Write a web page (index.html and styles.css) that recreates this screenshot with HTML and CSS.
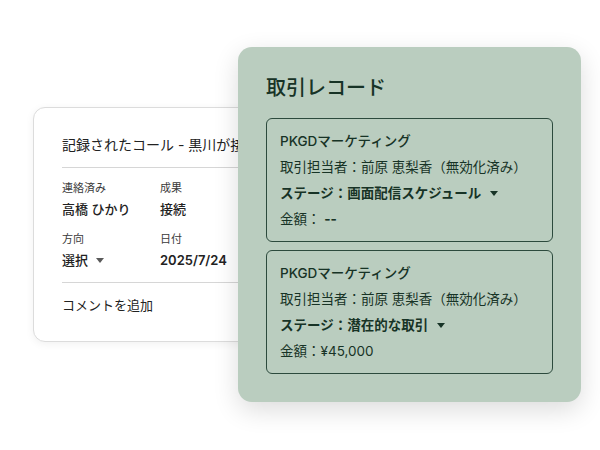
FILE: index.html
```html
<!DOCTYPE html>
<html lang="ja">
<head>
<meta charset="utf-8">
<link rel="stylesheet" href="styles.css">
</head>
<body>
<div class="canvas">
  <div class="call-card">
    <div class="call-title">記録されたコール - 黒川が接</div>
    <div class="divider"></div>
    <div class="fields">
      <div class="field">
        <div class="label">連絡済み</div>
        <div class="value">高橋 ひかり</div>
      </div>
      <div class="field">
        <div class="label">成果</div>
        <div class="value">接続</div>
      </div>
      <div class="field">
        <div class="label">方向</div>
        <div class="value">選択 <span class="caret caret-gray"></span></div>
      </div>
      <div class="field">
        <div class="label">日付</div>
        <div class="value date">2025/7/24</div>
      </div>
    </div>
    <div class="divider"></div>
    <div class="comment">コメントを追加</div>
  </div>

  <div class="deal-card">
    <div class="deal-title">取引レコード</div>
    <div class="deal-box">
      <div class="line name">PKGDマーケティング</div>
      <div class="line">取引担当者：前原 恵梨香（無効化済み）</div>
      <div class="line stage">ステージ：画面配信スケジュール <span class="caret caret-dark"></span></div>
      <div class="line">金額：&nbsp;<span class="dash">--</span></div>
    </div>
    <div class="deal-box">
      <div class="line name">PKGDマーケティング</div>
      <div class="line">取引担当者：前原 恵梨香（無効化済み）</div>
      <div class="line stage">ステージ：潜在的な取引 <span class="caret caret-dark"></span></div>
      <div class="line">金額：¥45,000</div>
    </div>
  </div>
</div>
</body>
</html>
```

FILE: styles.css
```css
html, body {
  margin: 0;
  padding: 0;
  background: #ffffff;
}
body {
  font-family: "Inter", "Noto Sans CJK JP", "Noto Sans", sans-serif;
  width: 600px;
  height: 450px;
  overflow: hidden;
}
.canvas {
  position: relative;
  width: 600px;
  height: 450px;
}
.call-card {
  position: absolute;
  left: 33px;
  top: 107px;
  width: 300px;
  height: 235px;
  box-sizing: border-box;
  padding: 27px 0 0 28px;
  background: #fff;
  border: 1px solid #dcdcdc;
  border-radius: 12px;
  box-shadow: 0 2px 8px rgba(0,0,0,0.06);
  color: #222;
}
.call-title {
  font-size: 14px;
  line-height: 20px;
  white-space: nowrap;
  color: #222;
}
.divider {
  height: 1px;
  background: #d6d6d6;
  margin: 12px 0 12px 0;
}
.fields {
  display: grid;
  grid-template-columns: 98px 1fr;
  row-gap: 12px;
}
.label {
  font-size: 11px;
  line-height: 16px;
  color: #3a3a3a;
  margin-bottom: 3px;
}
.value {
  font-size: 13px;
  line-height: 20px;
  font-weight: 500;
  color: #222;
  display: flex;
  align-items: center;
  gap: 6px;
}
.value.date {
  font-weight: 600;
}
.comment {
  font-size: 13px;
  line-height: 20px;
  color: #222;
}
.caret {
  display: inline-block;
  width: 0;
  height: 0;
  border-left: 4.5px solid transparent;
  border-right: 4.5px solid transparent;
  border-top: 5px solid #555;
}
.caret-gray {
  border-top-color: #5a5a5a;
  margin-left: 2px;
}
.caret-dark {
  border-top-color: #173326;
  margin-left: 9px;
}
.deal-card {
  position: absolute;
  left: 238px;
  top: 47px;
  width: 343px;
  height: 355px;
  box-sizing: border-box;
  padding: 27px 28px 28px 28px;
  background: #bacdbf;
  border-radius: 14px;
  box-shadow: 0 8px 26px rgba(0,0,0,0.14);
  color: #173326;
  display: flex;
  flex-direction: column;
  gap: 8px;
}
.deal-title {
  font-size: 20px;
  line-height: 28px;
  font-weight: 500;
  margin-bottom: 8px;
}
.deal-box {
  border: 1px solid #2c4a3d;
  border-radius: 6px;
  padding: 9px 13px;
}
.line {
  font-size: 13.5px;
  line-height: 26px;
  display: flex;
  align-items: center;
  white-space: nowrap;
}
.line.name {
  font-weight: 500;
}
.line.stage {
  font-weight: 700;
}
.dash {
  font-weight: 700;
}
```
